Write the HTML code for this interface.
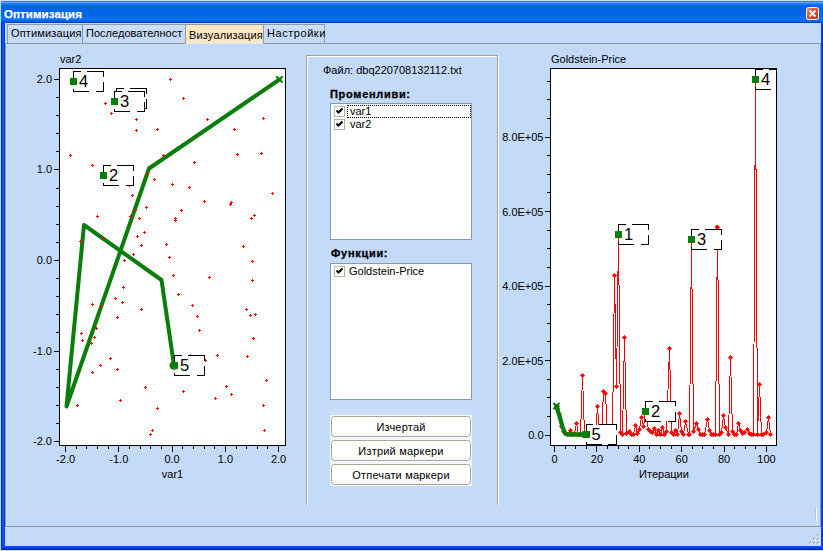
<!DOCTYPE html>
<html lang="bg">
<head>
<meta charset="utf-8">
<title>Оптимизация</title>
<style>
html,body{margin:0;padding:0}
body{width:823px;height:551px;overflow:hidden;position:relative;background:#0a46e4;font-family:"Liberation Sans",Arial,sans-serif;font-size:11px;color:#000}
.abs{position:absolute}
#title{left:0;top:0;width:823px;height:23px;background:linear-gradient(to bottom,#c8e0fa 0,#c8e0fa 1px,#4a70e8 1px,#4a70e8 2px,#58a4f2 2px,#58a4f2 3px,#2a84ee 3.5px,#0a6ae6 5px,#0066e6 7px,#0066e8 16px,#0a78f4 18.5px,#0668ee 21px,#0448d0 22px,#0444cc 23px)}
#title span{position:absolute;left:4px;top:8px;line-height:13px;font-weight:bold;font-size:11.5px;color:#fff;letter-spacing:0.1px;-webkit-text-stroke:0.25px #fff}
#close{left:806px;top:7px;width:11px;height:11px;border:1px solid #fff;border-radius:2.5px;background:linear-gradient(135deg,#ee8a62 0,#e34f26 45%,#c8360f 100%)}
#client{left:5px;top:23px;width:816px;height:523px;background:#c4daf9}
#edge{left:0;top:0;width:1px;height:551px;background:#c3d3f3}
#bL{left:1px;top:23px;width:4px;height:527px;background:linear-gradient(to right,#0420c8 0,#0420c8 1px,#0858ee 1px,#0858ee 3px,#0540d6 3px)}
#bR{left:821px;top:23px;width:2px;height:527px;background:linear-gradient(to right,#0448ee 0,#0448ee 1px,#0c30d0 1px)}
#edgeB{left:0;top:550px;width:823px;height:1px;background:#c9d6f2}
#botB{left:1px;top:546px;width:822px;height:4px;background:linear-gradient(to bottom,#0855ee 0,#0850ea 1px,#0638d6 2px,#0420bc 4px)}
.tab{position:absolute;top:24px;height:18px;border:1px solid #8e9a9c;border-bottom:none;background:linear-gradient(to bottom,#cde0fb,#c2d8f8);box-sizing:content-box;white-space:nowrap}
.tab span{position:absolute;left:3px;top:2px;letter-spacing:0.15px}
#t3{top:24px;height:18px;background:#fce6c4;z-index:2;border-bottom:1px solid #dde8fb}
#t3 span{top:4px}
#paneTop{left:5px;top:43px;width:816px;height:1px;background:#8e9a9c}
#paneL{left:5px;top:43px;width:1px;height:484px;background:#8e9a9c}
#paneR{left:820px;top:43px;width:1px;height:484px;background:#8e9a9c}
#statusLine{left:5px;top:526px;width:816px;height:1px;background:#8e9a9c}
#gb{left:306px;top:55px;width:190px;height:449px;border:1px solid #a3a396;border-bottom:none;box-shadow:inset 1px 1px 0 #fff,1px 0 0 #fff}
.lb{position:absolute;left:330px;width:140px;background:#fff;border:1px solid #7f9db9}
.cb{position:absolute;left:334px;width:11px;height:11px;border:1px solid #b4b4a6;background:#fff;box-sizing:border-box}
.cb svg{position:absolute;left:1px;top:1px}
.lbl{position:absolute;white-space:nowrap}
.b{font-weight:bold;letter-spacing:0.7px;-webkit-text-stroke:0.3px #000}
#btns{left:330px;top:415px;width:142px;height:71px;background:#f3f6fc}
#btnsTop{left:330px;top:409px;width:142px;height:6px;background:#cbdffa}
.btn{position:absolute;left:331px;width:138px;height:19px;border:1px solid #a8a899;border-radius:3.5px;background:linear-gradient(to bottom,#ffffff 0,#fefefd 75%,#f4f3ee 100%);text-align:center;line-height:20px;font-size:11px;letter-spacing:0.2px}
#vline{left:816px;top:508px;width:1px;height:13px;background:#fff;box-shadow:-1px 0 0 #b4c4dc}
</style>
</head>
<body>
<div class="abs" id="title"><span>Оптимизация</span></div>
<div class="abs" id="close"><svg width="11" height="11" viewBox="0 0 11 11" style="position:absolute;left:0;top:0"><path d="M2.5 2.5l6 6M8.5 2.5l-6 6" stroke="#fff" stroke-width="1.8" fill="none"/></svg></div>
<div class="abs" id="client"></div>
<div class="abs" id="bL"></div>
<div class="abs" id="bR"></div>
<div class="abs" id="botB"></div>
<div class="abs" id="edge"></div>
<div class="abs" id="edgeB"></div>
<div class="abs" id="paneTop"></div>
<div class="abs" id="paneL"></div>
<div class="abs" id="paneR"></div>
<div class="abs" id="statusLine"></div>
<div class="tab" id="t1" style="left:7px;width:74px"><span>Оптимизация</span></div>
<div class="tab" id="t2" style="left:82px;width:102px"><span style="letter-spacing:0.03px">Последователност</span></div>
<div class="tab" id="t3" style="left:185px;width:77px"><span>Визуализация</span></div>
<div class="tab" id="t4" style="left:263px;width:60px"><span style="letter-spacing:0.55px">Настройки</span></div>

<div class="abs" id="gb"></div>
<div class="lbl" style="left:323px;top:64px">Файл: dbq220708132112.txt</div>
<div class="lbl b" style="left:330px;top:88px">Променливи:</div>
<div class="lb" style="top:103px;height:135px"></div>
<div class="abs" style="left:347px;top:105px;width:122px;height:11px;border:1px dotted #000"></div>
<div class="cb" style="top:106px"><svg width="7" height="7" viewBox="0 0 7 7"><path d="M0.5 2.5l2 2l4 -4" stroke="#000" stroke-width="2.1" fill="none"/></svg></div>
<div class="cb" style="top:119px"><svg width="7" height="7" viewBox="0 0 7 7"><path d="M0.5 2.5l2 2l4 -4" stroke="#000" stroke-width="2.1" fill="none"/></svg></div>
<div class="lbl" style="left:350px;top:105px">var1</div>
<div class="lbl" style="left:350px;top:118px">var2</div>
<div class="lbl b" style="left:331px;top:247px">Функции:</div>
<div class="lb" style="top:263px;height:135px"></div>
<div class="cb" style="top:266px"><svg width="7" height="7" viewBox="0 0 7 7"><path d="M0.5 2.5l2 2l4 -4" stroke="#000" stroke-width="2.1" fill="none"/></svg></div>
<div class="lbl" style="left:349px;top:265px">Goldstein-Price</div>
<div class="abs" id="btnsTop"></div>
<div class="abs" id="btns"></div>
<div class="btn" style="top:416px">Изчертай</div>
<div class="btn" style="top:440px">Изтрий маркери</div>
<div class="btn" style="top:464px">Отпечати маркери</div>
<div class="abs" id="vline"></div>
<svg width="823" height="551" viewBox="0 0 823 551" style="position:absolute;left:0;top:0" font-family="Liberation Sans, Arial, sans-serif" fill="#000">
<defs><clipPath id="clipR"><rect x="551" y="69" width="225" height="376"/></clipPath><clipPath id="clipL"><rect x="60" y="69" width="225" height="376"/></clipPath></defs>
<rect x="59.5" y="68.5" width="226.0" height="377.0" fill="#fff" stroke="#000" stroke-width="1"/><path d="M54.0 441.5h5M65.5 446.0v6M56.0 423.5h3M76.5 446.0v3M56.0 405.5h3M86.5 446.0v3M56.0 387.5h3M97.5 446.0v3M56.0 369.5h3M108.5 446.0v3M54.0 351.5h5M118.5 446.0v6M56.0 332.5h3M129.5 446.0v3M56.0 314.5h3M140.5 446.0v3M56.0 296.5h3M150.5 446.0v3M56.0 278.5h3M161.5 446.0v3M54.0 260.5h5M172.5 446.0v6M56.0 242.5h3M182.5 446.0v3M56.0 224.5h3M193.5 446.0v3M56.0 206.5h3M204.5 446.0v3M56.0 188.5h3M214.5 446.0v3M54.0 169.5h5M225.5 446.0v6M56.0 151.5h3M236.5 446.0v3M56.0 133.5h3M246.5 446.0v3M56.0 115.5h3M257.5 446.0v3M56.0 97.5h3M267.5 446.0v3M54.0 79.5h5M278.5 446.0v6" stroke="#000" stroke-width="1" fill="none" shape-rendering="crispEdges"/><text x="52" y="445.1" text-anchor="end" font-size="11">-2.0</text><text x="65.6" y="463" text-anchor="middle" font-size="11">-2.0</text><text x="52" y="354.6" text-anchor="end" font-size="11">-1.0</text><text x="118.8" y="463" text-anchor="middle" font-size="11">-1.0</text><text x="52" y="264.0" text-anchor="end" font-size="11">0.0</text><text x="172.1" y="463" text-anchor="middle" font-size="11">0.0</text><text x="52" y="173.4" text-anchor="end" font-size="11">1.0</text><text x="225.4" y="463" text-anchor="middle" font-size="11">1.0</text><text x="52" y="82.9" text-anchor="end" font-size="11">2.0</text><text x="278.6" y="463" text-anchor="middle" font-size="11">2.0</text><text x="60" y="63" font-size="11">var2</text><text x="172.5" y="478" font-size="11" text-anchor="middle">var1</text><polyline points="279.5,79.5 149,168.5 66.5,406.5 84,225 161.5,280 174,365.5" fill="none" stroke="#0a7d0a" stroke-width="4" stroke-linejoin="round" stroke-linecap="round"/><g stroke="#ff0000" stroke-width="1" fill="none" shape-rendering="crispEdges"><path d="M169.0 79.5h3M170.5 78.0v3"/><path d="M182.0 98.5h3M183.5 97.0v3"/><path d="M104.0 103.5h3M105.5 102.0v3"/><path d="M110.0 113.5h3M111.5 112.0v3"/><path d="M135.0 119.5h3M136.5 118.0v3"/><path d="M135.0 130.5h3M136.5 129.0v3"/><path d="M156.0 129.5h3M157.5 128.0v3"/><path d="M206.0 119.5h3M207.5 118.0v3"/><path d="M233.0 129.5h3M234.5 128.0v3"/><path d="M262.0 118.5h3M263.5 117.0v3"/><path d="M69.0 155.5h3M70.5 154.0v3"/><path d="M91.0 165.5h3M92.5 164.0v3"/><path d="M162.0 155.5h3M163.5 154.0v3"/><path d="M193.0 162.5h3M194.5 161.0v3"/><path d="M146.0 173.5h3M147.5 172.0v3"/><path d="M153.0 179.5h3M154.5 178.0v3"/><path d="M171.0 184.5h3M172.5 183.0v3"/><path d="M188.0 187.5h3M189.5 186.0v3"/><path d="M128.0 185.5h3M129.5 184.0v3"/><path d="M131.0 195.5h3M132.5 194.0v3"/><path d="M203.0 201.5h3M204.5 200.0v3"/><path d="M145.0 207.5h3M146.5 206.0v3"/><path d="M134.0 210.5h3M135.5 209.0v3"/><path d="M180.0 210.5h3M181.5 209.0v3"/><path d="M96.0 216.5h3M97.5 215.0v3"/><path d="M129.0 216.5h3M130.5 215.0v3"/><path d="M138.0 218.5h3M139.5 217.0v3"/><path d="M174.0 218.5h3M175.5 217.0v3"/><path d="M174.0 220.5h3M175.5 219.0v3"/><path d="M143.0 232.5h3M144.5 231.0v3"/><path d="M136.0 236.5h3M137.5 235.0v3"/><path d="M79.0 241.5h3M80.5 240.0v3"/><path d="M102.0 238.5h3M103.5 237.0v3"/><path d="M140.0 245.5h3M141.5 244.0v3"/><path d="M165.0 244.5h3M166.5 243.0v3"/><path d="M132.0 254.5h3M133.5 253.0v3"/><path d="M168.0 257.5h3M169.5 256.0v3"/><path d="M123.0 260.5h3M124.5 259.0v3"/><path d="M172.0 275.5h3M173.5 274.0v3"/><path d="M236.0 154.5h3M237.5 153.0v3"/><path d="M260.0 153.5h3M261.5 152.0v3"/><path d="M271.0 193.5h3M272.5 192.0v3"/><path d="M229.0 204.5h3M230.5 203.0v3"/><path d="M230.0 202.5h3M231.5 201.0v3"/><path d="M253.0 215.5h3M254.5 214.0v3"/><path d="M250.0 218.5h3M251.5 217.0v3"/><path d="M242.0 246.5h3M243.5 245.0v3"/><path d="M251.0 261.5h3M252.5 260.0v3"/><path d="M208.0 277.5h3M209.5 276.0v3"/><path d="M251.0 280.5h3M252.5 279.0v3"/><path d="M245.0 309.5h3M246.5 308.0v3"/><path d="M249.0 315.5h3M250.5 314.0v3"/><path d="M254.0 314.5h3M255.5 313.0v3"/><path d="M252.0 338.5h3M253.5 337.0v3"/><path d="M122.0 287.5h3M123.5 286.0v3"/><path d="M177.0 294.5h3M178.5 293.0v3"/><path d="M114.0 298.5h3M115.5 297.0v3"/><path d="M121.0 302.5h3M122.5 301.0v3"/><path d="M91.0 304.5h3M92.5 303.0v3"/><path d="M100.0 306.5h3M101.5 305.0v3"/><path d="M140.0 309.5h3M141.5 308.0v3"/><path d="M191.0 305.5h3M192.5 304.0v3"/><path d="M196.0 316.5h3M197.5 315.0v3"/><path d="M116.0 317.5h3M117.5 316.0v3"/><path d="M95.0 328.5h3M96.5 327.0v3"/><path d="M198.0 330.5h3M199.5 329.0v3"/><path d="M80.0 333.5h3M81.5 332.0v3"/><path d="M93.0 337.5h3M94.5 336.0v3"/><path d="M81.0 340.5h3M82.5 339.0v3"/><path d="M90.0 343.5h3M91.5 342.0v3"/><path d="M109.0 358.5h3M110.5 357.0v3"/><path d="M99.0 365.5h3M100.5 364.0v3"/><path d="M91.0 372.5h3M92.5 371.0v3"/><path d="M116.0 369.5h3M117.5 368.0v3"/><path d="M144.0 387.5h3M145.5 386.0v3"/><path d="M182.0 391.5h3M183.5 390.0v3"/><path d="M119.0 400.5h3M120.5 399.0v3"/><path d="M76.0 405.5h3M77.5 404.0v3"/><path d="M156.0 408.5h3M157.5 407.0v3"/><path d="M216.0 355.5h3M217.5 354.0v3"/><path d="M246.0 356.5h3M247.5 355.0v3"/><path d="M189.0 355.5h3M190.5 354.0v3"/><path d="M204.0 360.5h3M205.5 359.0v3"/><path d="M265.0 380.5h3M266.5 379.0v3"/><path d="M225.0 386.5h3M226.5 385.0v3"/><path d="M230.0 394.5h3M231.5 393.0v3"/><path d="M214.0 398.5h3M215.5 397.0v3"/><path d="M262.0 405.5h3M263.5 404.0v3"/><path d="M263.0 430.5h3M264.5 429.0v3"/><path d="M151.0 430.5h3M152.5 429.0v3"/><path d="M149.0 434.5h3M150.5 433.0v3"/></g><path d="M276.2 76.2l6.4 6.4M282.6 76.2l-6.4 6.4" stroke="#0a7d0a" stroke-width="2" fill="none"/><rect x="73.5" y="71.5" width="30" height="20" fill="#fff" stroke="#000" stroke-width="1" stroke-dasharray="7 6 22 5.5 17.5 6.5 18 6 11.5" shape-rendering="crispEdges"/><text x="79.0" y="87.0" font-size="16.5" fill="#000">4</text><rect x="70.0" y="78.0" width="7" height="7" fill="#0a7d0a" shape-rendering="crispEdges"/><rect x="116.5" y="88.5" width="30" height="20" fill="#fff" stroke="#000" stroke-width="1" stroke-dasharray="7 6 22 5.5 17.5 6.5 18 6 11.5" shape-rendering="crispEdges"/><rect x="114.5" y="91.5" width="30" height="20" fill="#fff" stroke="#000" stroke-width="1" stroke-dasharray="7 6 22 5.5 17.5 6.5 18 6 11.5" shape-rendering="crispEdges"/><text x="120.0" y="107.0" font-size="16.5" fill="#000">3</text><rect x="111.0" y="98.0" width="7" height="7" fill="#0a7d0a" shape-rendering="crispEdges"/><rect x="103.5" y="165.5" width="30" height="20" fill="#fff" stroke="#000" stroke-width="1" stroke-dasharray="7 6 22 5.5 17.5 6.5 18 6 11.5" shape-rendering="crispEdges"/><text x="109.0" y="181.0" font-size="16.5" fill="#000">2</text><rect x="100.0" y="172.0" width="7" height="7" fill="#0a7d0a" shape-rendering="crispEdges"/><rect x="174.5" y="355.5" width="30" height="20" fill="#fff" stroke="#000" stroke-width="1" stroke-dasharray="7 6 22 5.5 17.5 6.5 18 6 11.5" shape-rendering="crispEdges"/><text x="180.0" y="371.0" font-size="16.5" fill="#000">5</text><rect x="171.0" y="362.0" width="7" height="7" fill="#0a7d0a" shape-rendering="crispEdges"/><circle cx="173.7" cy="365.5" r="4.2" fill="#0a7d0a"/>
<rect x="550.5" y="68.5" width="226.0" height="377.0" fill="#fff" stroke="#000" stroke-width="1"/><path d="M545.0 435.5h5M547.0 416.5h3M547.0 397.5h3M547.0 379.5h3M545.0 360.5h5M547.0 341.5h3M547.0 323.5h3M547.0 304.5h3M545.0 286.5h5M547.0 267.5h3M547.0 248.5h3M547.0 230.5h3M545.0 211.5h5M547.0 192.5h3M547.0 174.5h3M547.0 155.5h3M545.0 137.5h5M547.0 118.5h3M547.0 99.5h3M547.0 81.5h3M554.5 446.0v6M565.5 446.0v3M575.5 446.0v3M586.5 446.0v3M596.5 446.0v6M607.5 446.0v3M618.5 446.0v3M628.5 446.0v3M639.5 446.0v6M649.5 446.0v3M660.5 446.0v3M671.5 446.0v3M681.5 446.0v6M692.5 446.0v3M702.5 446.0v3M713.5 446.0v3M724.5 446.0v6M734.5 446.0v3M745.5 446.0v3M755.5 446.0v3M766.5 446.0v6" stroke="#000" stroke-width="1" fill="none" shape-rendering="crispEdges"/><text x="543.5" y="439.3" text-anchor="end" font-size="11">0.0</text><text x="543.5" y="364.8" text-anchor="end" font-size="11">2.0E+05</text><text x="543.5" y="290.3" text-anchor="end" font-size="11">4.0E+05</text><text x="543.5" y="215.8" text-anchor="end" font-size="11">6.0E+05</text><text x="543.5" y="141.3" text-anchor="end" font-size="11">8.0E+05</text><text x="554.5" y="463" text-anchor="middle" font-size="11">0</text><text x="596.9" y="463" text-anchor="middle" font-size="11">20</text><text x="639.3" y="463" text-anchor="middle" font-size="11">40</text><text x="681.7" y="463" text-anchor="middle" font-size="11">60</text><text x="724.1" y="463" text-anchor="middle" font-size="11">80</text><text x="766.5" y="463" text-anchor="middle" font-size="11">100</text><text x="551" y="63" font-size="11">Goldstein-Price</text><text x="664" y="478" font-size="11" text-anchor="middle">Итерации</text><polyline points="557.5,406.5 559.5,414.5 561.5,426.5 563.5,431.5 565.5,433.5 567.5,434.5 570.5,430.5 572.5,434.5 574.5,433.5 576.5,423.5 578.5,434.5 580.5,434.5 582.5,375.5 584.5,434.5 586.5,433.5 588.5,434.5 591.5,434.5 593.5,434.5 595.5,434.5 597.5,406.5 599.5,434.5 601.5,434.5 603.5,391.5 605.5,393.5 607.5,434.5 610.5,434.5 612.5,432.5 614.5,275.5 616.5,386.5 618.5,234.5 620.5,432.5 622.5,434.5 624.5,337.5 626.5,433.5 629.5,431.5 631.5,434.5 633.5,434.5 635.5,425.5 637.5,433.5 639.5,429.5 641.5,417.5 643.5,426.5 645.5,411.5 648.5,429.5 650.5,431.5 652.5,432.5 654.5,428.5 656.5,434.5 658.5,430.5 660.5,434.5 662.5,427.5 664.5,434.5 666.5,431.5 669.5,348.5 671.5,432.5 673.5,434.5 675.5,430.5 677.5,434.5 679.5,413.5 681.5,431.5 683.5,434.5 685.5,421.5 688.5,434.5 689.5,434.5 691.5,239.5 693.5,431.5 696.5,423.5 698.5,429.5 700.5,434.5 702.5,434.5 704.5,434.5 707.5,419.5 709.5,430.5 711.5,434.5 713.5,434.5 715.5,434.5 717.5,227.5 719.5,434.5 721.5,432.5 723.5,415.5 725.5,427.5 728.5,434.5 730.5,357.5 732.5,431.5 734.5,434.5 736.5,434.5 738.5,423.5 740.5,430.5 742.5,433.5 744.5,432.5 747.5,429.5 749.5,433.5 751.5,434.5 753.5,434.5 755.5,79.5 757.5,434.5 759.5,384.5 761.5,434.5 763.5,434.5 766.5,432.5 768.5,417.5 770.5,434.5" fill="none" stroke="#ff0000" stroke-width="1" shape-rendering="crispEdges"/><path d="M555.0 406.5l2.5 -2.5l2.5 2.5l-2.5 2.5zM557.0 414.5l2.5 -2.5l2.5 2.5l-2.5 2.5zM559.0 426.5l2.5 -2.5l2.5 2.5l-2.5 2.5zM561.0 431.5l2.5 -2.5l2.5 2.5l-2.5 2.5zM563.0 433.5l2.5 -2.5l2.5 2.5l-2.5 2.5zM565.0 434.5l2.5 -2.5l2.5 2.5l-2.5 2.5zM568.0 430.5l2.5 -2.5l2.5 2.5l-2.5 2.5zM570.0 434.5l2.5 -2.5l2.5 2.5l-2.5 2.5zM572.0 433.5l2.5 -2.5l2.5 2.5l-2.5 2.5zM574.0 423.5l2.5 -2.5l2.5 2.5l-2.5 2.5zM576.0 434.5l2.5 -2.5l2.5 2.5l-2.5 2.5zM578.0 434.5l2.5 -2.5l2.5 2.5l-2.5 2.5zM580.0 375.5l2.5 -2.5l2.5 2.5l-2.5 2.5zM582.0 434.5l2.5 -2.5l2.5 2.5l-2.5 2.5zM584.0 433.5l2.5 -2.5l2.5 2.5l-2.5 2.5zM586.0 434.5l2.5 -2.5l2.5 2.5l-2.5 2.5zM589.0 434.5l2.5 -2.5l2.5 2.5l-2.5 2.5zM591.0 434.5l2.5 -2.5l2.5 2.5l-2.5 2.5zM593.0 434.5l2.5 -2.5l2.5 2.5l-2.5 2.5zM595.0 406.5l2.5 -2.5l2.5 2.5l-2.5 2.5zM597.0 434.5l2.5 -2.5l2.5 2.5l-2.5 2.5zM599.0 434.5l2.5 -2.5l2.5 2.5l-2.5 2.5zM601.0 391.5l2.5 -2.5l2.5 2.5l-2.5 2.5zM603.0 393.5l2.5 -2.5l2.5 2.5l-2.5 2.5zM605.0 434.5l2.5 -2.5l2.5 2.5l-2.5 2.5zM608.0 434.5l2.5 -2.5l2.5 2.5l-2.5 2.5zM610.0 432.5l2.5 -2.5l2.5 2.5l-2.5 2.5zM612.0 275.5l2.5 -2.5l2.5 2.5l-2.5 2.5zM614.0 386.5l2.5 -2.5l2.5 2.5l-2.5 2.5zM616.0 234.5l2.5 -2.5l2.5 2.5l-2.5 2.5zM618.0 432.5l2.5 -2.5l2.5 2.5l-2.5 2.5zM620.0 434.5l2.5 -2.5l2.5 2.5l-2.5 2.5zM622.0 337.5l2.5 -2.5l2.5 2.5l-2.5 2.5zM624.0 433.5l2.5 -2.5l2.5 2.5l-2.5 2.5zM627.0 431.5l2.5 -2.5l2.5 2.5l-2.5 2.5zM629.0 434.5l2.5 -2.5l2.5 2.5l-2.5 2.5zM631.0 434.5l2.5 -2.5l2.5 2.5l-2.5 2.5zM633.0 425.5l2.5 -2.5l2.5 2.5l-2.5 2.5zM635.0 433.5l2.5 -2.5l2.5 2.5l-2.5 2.5zM637.0 429.5l2.5 -2.5l2.5 2.5l-2.5 2.5zM639.0 417.5l2.5 -2.5l2.5 2.5l-2.5 2.5zM641.0 426.5l2.5 -2.5l2.5 2.5l-2.5 2.5zM643.0 411.5l2.5 -2.5l2.5 2.5l-2.5 2.5zM646.0 429.5l2.5 -2.5l2.5 2.5l-2.5 2.5zM648.0 431.5l2.5 -2.5l2.5 2.5l-2.5 2.5zM650.0 432.5l2.5 -2.5l2.5 2.5l-2.5 2.5zM652.0 428.5l2.5 -2.5l2.5 2.5l-2.5 2.5zM654.0 434.5l2.5 -2.5l2.5 2.5l-2.5 2.5zM656.0 430.5l2.5 -2.5l2.5 2.5l-2.5 2.5zM658.0 434.5l2.5 -2.5l2.5 2.5l-2.5 2.5zM660.0 427.5l2.5 -2.5l2.5 2.5l-2.5 2.5zM662.0 434.5l2.5 -2.5l2.5 2.5l-2.5 2.5zM664.0 431.5l2.5 -2.5l2.5 2.5l-2.5 2.5zM667.0 348.5l2.5 -2.5l2.5 2.5l-2.5 2.5zM669.0 432.5l2.5 -2.5l2.5 2.5l-2.5 2.5zM671.0 434.5l2.5 -2.5l2.5 2.5l-2.5 2.5zM673.0 430.5l2.5 -2.5l2.5 2.5l-2.5 2.5zM675.0 434.5l2.5 -2.5l2.5 2.5l-2.5 2.5zM677.0 413.5l2.5 -2.5l2.5 2.5l-2.5 2.5zM679.0 431.5l2.5 -2.5l2.5 2.5l-2.5 2.5zM681.0 434.5l2.5 -2.5l2.5 2.5l-2.5 2.5zM683.0 421.5l2.5 -2.5l2.5 2.5l-2.5 2.5zM686.0 434.5l2.5 -2.5l2.5 2.5l-2.5 2.5zM687.0 434.5l2.5 -2.5l2.5 2.5l-2.5 2.5zM689.0 239.5l2.5 -2.5l2.5 2.5l-2.5 2.5zM691.0 431.5l2.5 -2.5l2.5 2.5l-2.5 2.5zM694.0 423.5l2.5 -2.5l2.5 2.5l-2.5 2.5zM696.0 429.5l2.5 -2.5l2.5 2.5l-2.5 2.5zM698.0 434.5l2.5 -2.5l2.5 2.5l-2.5 2.5zM700.0 434.5l2.5 -2.5l2.5 2.5l-2.5 2.5zM702.0 434.5l2.5 -2.5l2.5 2.5l-2.5 2.5zM705.0 419.5l2.5 -2.5l2.5 2.5l-2.5 2.5zM707.0 430.5l2.5 -2.5l2.5 2.5l-2.5 2.5zM709.0 434.5l2.5 -2.5l2.5 2.5l-2.5 2.5zM711.0 434.5l2.5 -2.5l2.5 2.5l-2.5 2.5zM713.0 434.5l2.5 -2.5l2.5 2.5l-2.5 2.5zM715.0 227.5l2.5 -2.5l2.5 2.5l-2.5 2.5zM717.0 434.5l2.5 -2.5l2.5 2.5l-2.5 2.5zM719.0 432.5l2.5 -2.5l2.5 2.5l-2.5 2.5zM721.0 415.5l2.5 -2.5l2.5 2.5l-2.5 2.5zM723.0 427.5l2.5 -2.5l2.5 2.5l-2.5 2.5zM726.0 434.5l2.5 -2.5l2.5 2.5l-2.5 2.5zM728.0 357.5l2.5 -2.5l2.5 2.5l-2.5 2.5zM730.0 431.5l2.5 -2.5l2.5 2.5l-2.5 2.5zM732.0 434.5l2.5 -2.5l2.5 2.5l-2.5 2.5zM734.0 434.5l2.5 -2.5l2.5 2.5l-2.5 2.5zM736.0 423.5l2.5 -2.5l2.5 2.5l-2.5 2.5zM738.0 430.5l2.5 -2.5l2.5 2.5l-2.5 2.5zM740.0 433.5l2.5 -2.5l2.5 2.5l-2.5 2.5zM742.0 432.5l2.5 -2.5l2.5 2.5l-2.5 2.5zM745.0 429.5l2.5 -2.5l2.5 2.5l-2.5 2.5zM747.0 433.5l2.5 -2.5l2.5 2.5l-2.5 2.5zM749.0 434.5l2.5 -2.5l2.5 2.5l-2.5 2.5zM751.0 434.5l2.5 -2.5l2.5 2.5l-2.5 2.5zM753.0 79.5l2.5 -2.5l2.5 2.5l-2.5 2.5zM755.0 434.5l2.5 -2.5l2.5 2.5l-2.5 2.5zM757.0 384.5l2.5 -2.5l2.5 2.5l-2.5 2.5zM759.0 434.5l2.5 -2.5l2.5 2.5l-2.5 2.5zM761.0 434.5l2.5 -2.5l2.5 2.5l-2.5 2.5zM764.0 432.5l2.5 -2.5l2.5 2.5l-2.5 2.5zM766.0 417.5l2.5 -2.5l2.5 2.5l-2.5 2.5zM768.0 434.5l2.5 -2.5l2.5 2.5l-2.5 2.5z" fill="#ff0000"/><g clip-path="url(#clipR)"><rect x="586.0" y="424.5" width="30" height="20" fill="#fff" stroke="#000" stroke-width="1" stroke-dasharray="7 6 22 5.5 17.5 6.5 18 6 11.5" shape-rendering="crispEdges"/><text x="591.5" y="440.0" font-size="16.5" fill="#000">5</text><rect x="582.5" y="431.0" width="7" height="7" fill="#0a7d0a" shape-rendering="crispEdges"/><rect x="645.5" y="401.0" width="30" height="20" fill="#fff" stroke="#000" stroke-width="1" stroke-dasharray="7 6 22 5.5 17.5 6.5 18 6 11.5" shape-rendering="crispEdges"/><text x="651.0" y="416.5" font-size="16.5" fill="#000">2</text><rect x="642.0" y="407.5" width="7" height="7" fill="#0a7d0a" shape-rendering="crispEdges"/><rect x="618.5" y="224.5" width="30" height="20" fill="#fff" stroke="#000" stroke-width="1" stroke-dasharray="7 6 22 5.5 17.5 6.5 18 6 11.5" shape-rendering="crispEdges"/><text x="624.0" y="240.0" font-size="16.5" fill="#000">1</text><rect x="615.0" y="231.0" width="7" height="7" fill="#0a7d0a" shape-rendering="crispEdges"/><rect x="691.5" y="229.5" width="30" height="20" fill="#fff" stroke="#000" stroke-width="1" stroke-dasharray="7 6 22 5.5 17.5 6.5 18 6 11.5" shape-rendering="crispEdges"/><text x="697.0" y="245.0" font-size="16.5" fill="#000">3</text><rect x="688.0" y="236.0" width="7" height="7" fill="#0a7d0a" shape-rendering="crispEdges"/><rect x="755.5" y="69.5" width="30" height="20" fill="#fff" stroke="#000" stroke-width="1" stroke-dasharray="7 6 22 5.5 17.5 6.5 18 6 11.5" shape-rendering="crispEdges"/><text x="761.0" y="85.0" font-size="16.5" fill="#000">4</text><rect x="752.0" y="76.0" width="7" height="7" fill="#0a7d0a" shape-rendering="crispEdges"/></g><path d="M714.6 227l2.5 -2.5l2.5 2.5l-2.5 2.5z" fill="#ff0000"/><polyline points="556.3,406 559.5,416 562.5,427 565.3,433.8 569,434.5 586,434.5" fill="none" stroke="#0a7d0a" stroke-width="4.3" stroke-linejoin="round" stroke-linecap="round"/><path d="M553.3 403l6.2 6.2M559.5 403l-6.2 6.2" stroke="#0a7d0a" stroke-width="2" fill="none"/><circle cx="585" cy="434.5" r="3.4" fill="#0a7d0a"/><rect x="582.5" y="431" width="7" height="7" fill="#0a7d0a"/>
</svg>
<svg class="abs" style="left:809px;top:534px" width="12" height="12" viewBox="0 0 12 12"><g fill="#a9a896"><rect x="8" y="8" width="2" height="2"/><rect x="4" y="8" width="2" height="2"/><rect x="0" y="8" width="2" height="2"/><rect x="8" y="4" width="2" height="2"/><rect x="4" y="4" width="2" height="2"/><rect x="8" y="0" width="2" height="2"/></g><g fill="#fff"><rect x="9" y="9" width="1.5" height="1.5"/><rect x="5" y="9" width="1.5" height="1.5"/><rect x="1" y="9" width="1.5" height="1.5"/><rect x="9" y="5" width="1.5" height="1.5"/><rect x="5" y="5" width="1.5" height="1.5"/><rect x="9" y="1" width="1.5" height="1.5"/></g></svg>
</body>
</html>
